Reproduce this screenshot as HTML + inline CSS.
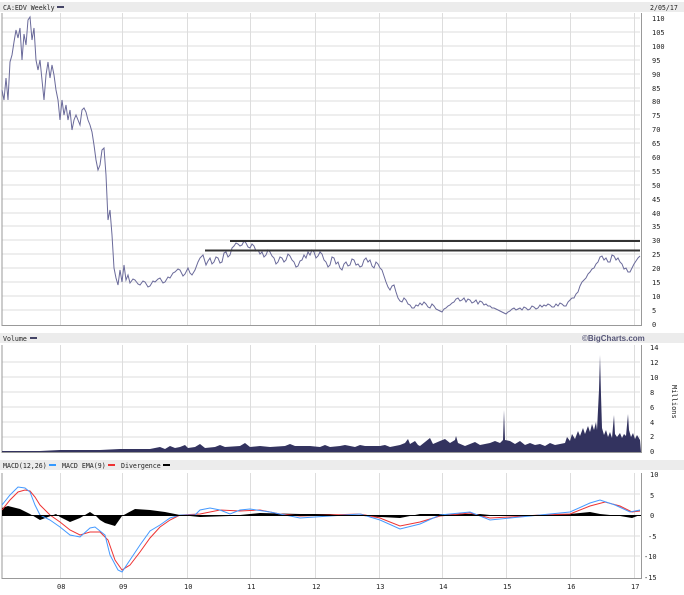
<!DOCTYPE html>
<html><head><style>
body{margin:0;background:#fff;width:684px;height:590px;overflow:hidden}
text{font-family:"DejaVu Sans Mono","Liberation Mono",monospace;font-size:7px;fill:#222}
.l{font-size:6.6px}
</style></head><body>
<svg width="684" height="590" viewBox="0 0 684 590" xmlns="http://www.w3.org/2000/svg">
<rect x="0" y="2" width="684" height="10" fill="#ececec"/>
<rect x="0" y="333" width="684" height="10" fill="#ececec"/>
<rect x="0" y="460" width="684" height="10" fill="#ececec"/>
<text class="l" x="3" y="10">CA:EDV Weekly</text><rect x="57" y="6" width="7" height="2" fill="#446"/>
<text class="l" x="650" y="10">2/05/17</text>
<text class="l" x="3" y="341">Volume</text><rect x="30" y="337" width="7" height="2" fill="#446"/>
<text x="582" y="341" style="font-family:'Liberation Sans',sans-serif;font-size:8px;font-weight:bold;fill:#557">©BigCharts.com</text>
<text class="l" x="3" y="468">MACD(12,26)</text><rect x="49" y="464" width="7" height="2" fill="#39f"/>
<text class="l" x="62" y="468">MACD EMA(9)</text><rect x="108" y="464" width="7" height="2" fill="#e33"/>
<text class="l" x="121" y="468">Divergence</text><rect x="163" y="464" width="7" height="2" fill="#000"/>
<g stroke="#ddd" stroke-width="1">
<path d="M2 18H640M2 32H640M2 46H640M2 60H640M2 74H640M2 88H640M2 101H640M2 115H640M2 129H640M2 143H640M2 157H640M2 171H640M2 185H640M2 199H640M2 213H640M2 226H640M2 240H640M2 254H640M2 268H640M2 282H640M2 296H640M2 310H640"/>
<path d="M2 362H640M2 377H640M2 392H640M2 407H640M2 422H640M2 437H640"/>
<path d="M2 494H640M2 536H640M2 556H640"/>
<path d="M60.5 13V325M122.5 13V325M187.5 13V325M250.5 13V325M315.5 13V325M379.5 13V325M442.5 13V325M506.5 13V325M570.5 13V325M634.5 13V325"/>
<path d="M60.5 345V452M122.5 345V452M187.5 345V452M250.5 345V452M315.5 345V452M379.5 345V452M442.5 345V452M506.5 345V452M570.5 345V452M634.5 345V452"/>
<path d="M60.5 473V578M122.5 473V578M187.5 473V578M250.5 473V578M315.5 473V578M379.5 473V578M442.5 473V578M506.5 473V578M570.5 473V578M634.5 473V578"/>
</g>
<g stroke="#999" fill="none">
<path d="M2 13V325.5H641.5V13"/>
<path d="M2 345V452.5H641.5V345"/>
<path d="M2 473V578.5H641.5V473"/>
</g>
<polyline fill="none" stroke="#6a6a9a" stroke-width="1" points="2,90 4,100 6,78 8,100 10,62 12,55 14,42 16,30 18,38 20,28 22,60 24,34 26,45 28,20 30,17 32,40 34,28 36,60 38,70 40,60 42,80 44,100 46,75 48,62 50,78 52,65 54,75 56,90 58,100 60,120 62,100 64,115 66,105 68,120 70,110 72,130 74,120 76,115 78,120 80,125 82,110 84,108 86,112 88,120 90,125 92,132 94,145 96,160 98,170 100,165 102,150 104,148 106,175 108,220 110,210 112,235 114,268 116,278 118,285 120,270 122,282 124,265 126,280 128,275 130,283 133,279 135,280 138,284 140,285 143,281 145,282 148,287 150,286 153,281 155,282 158,279 160,278 163,283 165,282 168,277 170,278 173,273 175,272 178,269 180,270 183,276 185,274 188,268 190,273 192,275 195,270 198,262 200,258 203,255 206,265 208,261 210,258 212,264 214,262 216,257 218,258 220,263 222,262 224,253 226,252 228,257 230,255 232,248 234,246 236,243 238,244 240,246 242,245 244,241 246,243 248,247 250,248 252,244 254,246 256,251 258,250 260,254 262,252 264,257 266,255 268,250 270,252 272,256 274,258 276,264 278,262 280,257 282,258 284,262 286,260 288,254 290,256 292,260 294,262 296,267 298,266 300,261 302,260 304,255 306,258 308,252 310,255 312,250 314,252 316,258 318,256 320,252 322,254 324,260 326,262 328,267 330,265 332,257 334,258 336,264 338,262 340,268 342,270 344,264 346,262 348,266 350,265 352,259 354,260 356,265 358,264 360,267 362,266 364,260 366,258 368,262 370,260 372,266 374,268 376,262 378,264 380,268 382,270 384,276 386,282 388,287 390,290 392,286 394,285 396,292 398,298 400,301 402,302 404,298 406,300 408,304 410,305 412,308 414,308 416,305 418,306 420,303 422,305 424,302 426,304 428,307 430,308 432,304 434,306 436,309 438,310 440,311 442,312 444,309 446,308 448,306 450,305 452,303 454,302 456,299 458,298 460,301 462,300 464,298 466,302 468,299 470,300 472,303 474,302 476,300 478,304 480,301 482,302 484,305 486,304 488,306 490,306 492,308 494,308 496,309 498,310 500,311 502,312 504,313 506,314 508,312 510,311 512,309 514,308 516,310 518,309 520,308 522,310 524,307 526,308 528,310 530,309 532,306 534,307 536,309 538,308 540,305 542,307 544,305 546,306 548,304 550,305 552,307 554,307 556,304 558,306 560,303 562,304 564,306 566,306 568,302 570,300 572,298 574,298 576,294 578,292 580,286 582,282 584,280 586,278 588,274 590,272 592,269 594,268 596,264 598,262 600,257 602,256 604,260 606,258 608,262 610,262 612,255 614,256 616,260 618,258 620,262 622,264 624,269 626,268 628,272 630,272 632,268 634,264 636,261 638,258 640,256"/>
<path d="M230 241H640M205 250.5H640" stroke="#333" stroke-width="2"/>
<polygon fill="#33335f" points="2,452 2,451 40,451 60,450 100,450 120,449 150,449 160,447 165,449 170,446 175,448 180,447 185,445 188,448 195,447 200,444 205,448 215,447 220,445 225,447 240,446 245,443 250,447 260,446 270,447 285,446 290,444 295,446 310,446 320,447 325,445 330,447 340,446 345,445 355,447 360,445 365,446 380,446 385,445 390,447 400,445 405,443 408,439 410,444 415,441 418,445 420,446 425,442 430,438 433,444 440,441 445,439 450,443 455,440 456,436 458,443 465,446 470,444 475,442 480,445 490,443 495,441 500,443 503,440 504,410 505,440 510,441 515,444 520,441 525,445 530,443 535,445 540,444 545,446 550,443 555,445 560,444 565,443 567,437 570,441 572,434 575,439 578,431 580,436 583,428 585,434 588,426 590,432 592,424 594,430 596,422 597,430 599,390 600,355 601,395 602,428 604,435 606,430 608,437 610,432 612,438 614,415 615,434 617,437 620,433 622,438 624,434 626,436 627,425 628,414 629,430 631,437 633,433 635,439 637,435 640,440 641,452"/>
<polygon fill="#000" points="2,508 8,506 20,509 30,514 40,520 48,517 56,514 60,517 70,522 80,518 90,512 96,516 100,520 105,523 115,526 122,516 135,509 150,510 165,512 180,515 200,517 230,516 260,513 300,514 330,514 380,517 400,518 420,514 440,514 480,514 500,516 540,515 570,514 590,512 600,514 620,516 632,518 640,515 640,515 2,515"/>
<polyline fill="none" stroke="#e33" points="2,510 10,500 18,492 25,490 30,491 35,497 40,505 50,515 60,522 70,530 80,535 90,532 100,532 108,540 115,560 122,570 130,565 140,552 150,538 160,527 170,520 180,515 200,514 220,510 240,511 260,510 280,514 300,516 330,515 360,514 380,518 400,526 420,522 440,516 470,513 490,518 510,517 540,515 570,514 590,506 605,502 620,506 632,512 640,511"/>
<polyline fill="none" stroke="#49f" points="2,505 10,495 18,487 25,488 30,492 35,505 40,515 50,520 60,527 70,535 80,537 90,528 95,527 105,535 110,555 118,570 122,572 130,560 140,545 150,531 160,525 170,518 180,515 195,515 200,510 210,508 220,510 230,514 240,510 250,509 270,512 300,518 330,516 360,514 380,520 400,529 420,524 440,515 470,512 490,520 510,518 540,515 570,512 590,503 600,500 615,505 630,512 640,510"/>
<path d="M2 515.5H641" stroke="#000" stroke-width="1"/>
<g>
<text x="652" y="21">110</text><text x="652" y="35">105</text><text x="652" y="49">100</text><text x="652" y="63">95</text><text x="652" y="77">90</text><text x="652" y="91">85</text><text x="652" y="104">80</text><text x="652" y="118">75</text><text x="652" y="132">70</text><text x="652" y="146">65</text><text x="652" y="160">60</text><text x="652" y="174">55</text><text x="652" y="188">50</text><text x="652" y="202">45</text><text x="652" y="216">40</text><text x="652" y="229">35</text><text x="652" y="243">30</text><text x="652" y="257">25</text><text x="652" y="271">20</text><text x="652" y="285">15</text><text x="652" y="299">10</text><text x="652" y="313">5</text><text x="652" y="327">0</text>
<text x="650" y="350">14</text><text x="650" y="365">12</text><text x="650" y="380">10</text><text x="650" y="395">8</text><text x="650" y="410">6</text><text x="650" y="425">4</text><text x="650" y="439">2</text><text x="650" y="454">0</text>
<text transform="translate(672,385) rotate(90)">Millions</text>
<text x="650" y="477">10</text><text x="650" y="498">5</text><text x="650" y="518">0</text><text x="648" y="539">-5</text><text x="644" y="559">-10</text><text x="644" y="580">-15</text>
<text x="57" y="589">08</text><text x="119" y="589">09</text><text x="184" y="589">10</text><text x="247" y="589">11</text><text x="312" y="589">12</text><text x="376" y="589">13</text><text x="439" y="589">14</text><text x="503" y="589">15</text><text x="567" y="589">16</text><text x="631" y="589">17</text>
</g>
</svg>
</body></html>
